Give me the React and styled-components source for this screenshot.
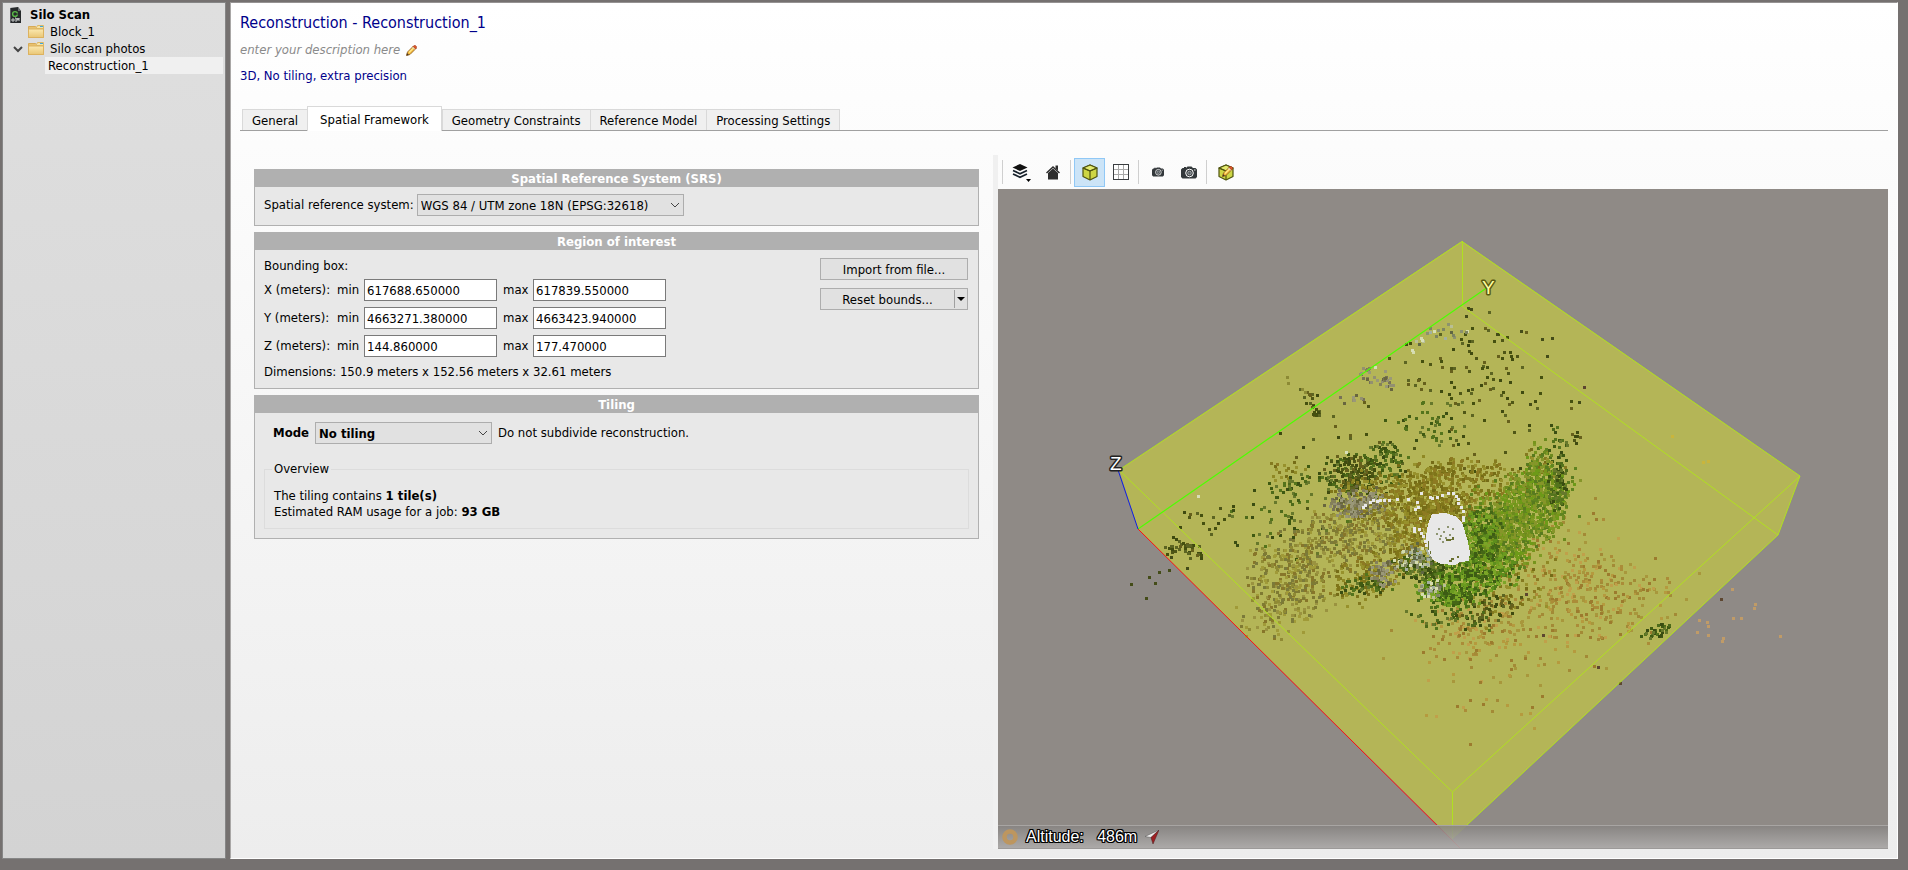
import React from "react";
import styled, { createGlobalStyle } from "styled-components";

const GlobalStyle = createGlobalStyle`
  *, *::before, *::after { box-sizing: border-box; }
  body {
    margin: 0;
    background: #757170;
    color: #000;
    font: 13px/16px "DejaVu Sans Condensed", Tahoma, "Noto Sans", sans-serif;
  }
  button, input, select { font: inherit; color: inherit; margin: 0; }
  svg { display: block; }
`;

/* ---------- window frame ---------- */

const Window = styled.div`
  display: flex;
  gap: 4px;
  min-height: 100vh;
  padding: 2px 10px 11px 2px;
`;

const Sidebar = styled.nav`
  flex: 0 0 224px;
  padding: 3px 2px;
  border: 1px solid #868686;
  background: linear-gradient(#dfdfdf, #d3d3d3);
`;

const Main = styled.main`
  flex: 1;
  min-width: 0;
  display: flex;
  flex-direction: column;
  padding: 9px;
  border: 1px solid #fff;
  border-top-color: #969393;
  border-left-color: #a9a7a6;
  background: linear-gradient(#ffffff, #ededed);
`;

/* ---------- project tree ---------- */

const Tree = styled.ul`
  list-style: none;
  margin: 0;
  padding: 0;
`;

const TreeItem = styled.li`
  display: flex;
  align-items: center;
  height: 17px;
  padding-left: ${(p) => p.$indent}px;
`;

const TreeLabel = styled.button`
  flex: 1;
  height: 17px;
  padding: 0 3px;
  border: 0;
  text-align: left;
  line-height: 17px;
  font-weight: ${(p) => (p.$root ? "bold" : "normal")};
  background: ${(p) => (p.$selected ? "#f0f0f0" : "transparent")};
`;

const TreeIcon = styled.span`
  flex: 0 0 ${(p) => p.$width}px;
`;

const Expander = styled.button`
  flex: 0 0 20px;
  height: 17px;
  padding: 0 5px;
  border: 0;
  background: transparent;
`;

/* ---------- header ---------- */

const Title = styled.h1`
  margin: 0 0 10px;
  padding-top: 1px;
  font-size: 16px;
  line-height: 19px;
  font-weight: normal;
  color: #00008b;
`;

const Description = styled.p`
  display: flex;
  align-items: center;
  gap: 6px;
  margin: 0 0 10px;
  color: #8a8a8a;
  font-style: italic;
`;

const IconButton = styled.button`
  padding: 0;
  border: 0;
  background: transparent;
`;

const Summary = styled.p`
  margin: 0 0 23px;
  color: #00008b;
`;

const TabList = styled.div`
  display: flex;
  align-items: flex-end;
  height: 24px;
  padding-left: 2px;
  border-bottom: 1px solid #a0a0a0;
`;

const Tab = styled.button`
  height: ${(p) => (p.$active ? 25 : 21)}px;
  margin: 0 ${(p) => (p.$active ? 0 : -1)}px ${(p) => (p.$active ? -1 : 0)}px 0;
  padding: 1px ${(p) => (p.$active ? 12 : 9)}px 0;
  border: 1px solid #d9d9d9;
  border-bottom: 0;
  background: ${(p) => (p.$active ? "#fff" : "#f0f0f0")};
`;

/* ---------- tab content ---------- */

const Content = styled.div`
  flex: 1;
  display: grid;
  grid-template-columns: minmax(0, 753fr) minmax(0, 895fr);
  padding-top: 24px;
`;

const Settings = styled.div`
  display: flex;
  flex-direction: column;
  gap: 6px;
  padding: 14px;
`;

const Panel = styled.section`
  border: 1px solid #b0b0b0;
  background: #e8e8e8;
`;

const PanelTitle = styled.h2`
  margin: -1px -1px 0;
  padding-top: 2px;
  font-size: 13px;
  line-height: 16px;
  text-align: center;
  color: #fff;
  background: #b0b0b0;
`;

const SrsRow = styled.div`
  display: flex;
  align-items: center;
  gap: 3px;
  padding: 7px 9px 9px;
`;

const SelectBox = styled.div`
  display: grid;
  align-items: center;
  width: ${(p) => p.$width}px;
  > * { grid-area: 1 / 1; }
  > svg { justify-self: end; margin-right: 4px; pointer-events: none; }
`;

const Select = styled.select`
  appearance: none;
  width: 100%;
  height: 22px;
  padding: 1px 20px 0 3px;
  border: 1px solid #adadad;
  border-radius: 0;
  background: #e1e1e1;
  font-weight: ${(p) => (p.$bold ? "bold" : "normal")};
`;

const RegionBody = styled.div`
  display: flex;
  justify-content: space-between;
  padding: 8px 10px 8px 9px;
`;

const BoundsForm = styled.div`
  display: flex;
  flex-direction: column;
  gap: 6px;
  > :first-child { margin-bottom: -1px; }
  > :last-child { padding-top: 1px; }
`;

const BoundsRow = styled.div`
  display: grid;
  grid-template-columns: 67px 21px 133px 24px 133px;
  column-gap: 6px;
  align-items: center;
`;

const NumberField = styled.input`
  width: 100%;
  height: 22px;
  padding: 1px 2px 0;
  border: 1px solid #7a7a7a;
  background: #fff;
`;

const Actions = styled.div`
  display: flex;
  flex-direction: column;
  gap: 8px;
  width: 148px;
`;

const PushButton = styled.button`
  flex: 1;
  height: 22px;
  padding: 1px 0 0;
  border: 1px solid #adadad;
  background: #e1e1e1;
`;

const ActionRow = styled.div`
  display: flex;
  ${PushButton}:first-child:not(:last-child) {
    border-right: 0;
  }
`;

const MenuButton = styled.button`
  display: flex;
  align-items: center;
  justify-content: center;
  width: 14px;
  height: 22px;
  padding: 0;
  border: 1px solid #adadad;
  border-left: 0;
  background: linear-gradient(#a0a0a0, #a0a0a0) 0 50% / 1px 18px no-repeat, #e1e1e1;
`;

const TilingBody = styled.div`
  padding: 9px;
`;

const ModeRow = styled.div`
  display: flex;
  align-items: center;
  gap: 6px;
  padding-left: 9px;
  margin-bottom: 17px;
`;

const Overview = styled.fieldset`
  margin: 0;
  min-width: 0;
  padding: 11px 9px 8px;
  border: 1px solid #dcdcdc;
`;

const OverviewTitle = styled.legend`
  padding: 0 2px;
  margin-left: -2px;
`;

const OverviewLine = styled.p`
  margin: 0;
`;

/* ---------- 3D view ---------- */

const Viewer = styled.section`
  display: flex;
  flex-direction: column;
  border-left: 5px solid #f0f0f0;
`;

const Toolbar = styled.div`
  display: flex;
  align-items: center;
  height: 34px;
  padding: 0 2px;
`;

const Separator = styled.span`
  width: 1px;
  height: 24px;
  margin: 0 3px 0 2px;
  background: #cfcfcf;
`;

const ToolButton = styled.button`
  display: flex;
  align-items: center;
  justify-content: center;
  width: 31px;
  height: 29px;
  padding: 0;
  border: 1px solid ${(p) => (p.$active ? "#90c8f6" : "transparent")};
  background: ${(p) => (p.$active ? "#cce4f7" : "transparent")};
`;

const Viewport = styled.div`
  flex: 1;
  display: grid;
  min-height: 400px;
  background: #8f8a86;
  > * { grid-area: 1 / 1; }
`;

const Scene = styled.svg`
  width: 100%;
  height: 100%;
  text {
    font: 19px "Liberation Sans", Arial, sans-serif;
    paint-order: stroke;
    stroke-width: 3px;
    stroke-linejoin: round;
  }
`;

const StatusBar = styled.div`
  align-self: end;
  z-index: 1;
  display: flex;
  align-items: center;
  gap: 8px;
  height: 24px;
  padding: 0 4px;
  border-top: 1px solid #a8a5a3;
  border-bottom: 1px solid #9c9a99;
  background: linear-gradient(rgba(135, 132, 130, 0.85), rgba(174, 172, 171, 0.92));
  color: #fff;
  font: 16px/18px "Liberation Sans", Arial, sans-serif;
  text-shadow: 1px 0 #000, -1px 0 #000, 0 1px #000, 0 -1px #000, 1px 1px #000, -1px -1px #000,
    1px -1px #000, -1px 1px #000;
`;

const Altitude = styled.span`
  white-space: pre;
`;

/* ---------- icons ---------- */

const Chevron = ({ size = 10, width = 1, color = "#444" }) => (
  <svg width={size} height={size} viewBox="0 0 10 10" fill="none" stroke={color} strokeWidth={width}>
    <path d="M1 3l4 4 4-4" />
  </svg>
);

const Caret = () => (
  <svg width="8" height="4" viewBox="0 0 8 4">
    <path d="M0 0h8L4 4z" fill="#000" />
  </svg>
);

const ProjectIcon = () => (
  <svg width="12" height="16" viewBox="0 0 12 16">
    <path d="M0 1l8-1 3 4v12H0z" fill="#26292b" />
    <path d="M8 0l3 4H8z" fill="#6a6e70" />
    <path d="M0 1l1 0v15H0z" fill="#5a5d60" />
    <circle cx="5" cy="7" r="2.4" fill="none" stroke="#58b947" strokeWidth="1.4" />
    <path d="M5 7h3" stroke="#26292b" strokeWidth="1" />
    <path d="M2 12h2v2H2zM5 11h1v4M7 14v-3l1 2 1-2v3" fill="none" stroke="#d6d8d9" strokeWidth="0.9" />
  </svg>
);

const FolderIcon = () => (
  <svg width="16" height="14" viewBox="0 0 16 14">
    <defs>
      <linearGradient id="folder" x1="0" y1="0" x2="0" y2="1">
        <stop offset="0" stopColor="#fbe9b0" />
        <stop offset="1" stopColor="#e9c675" />
      </linearGradient>
    </defs>
    <path d="M0.5 12.5V1.5h7l1 1h7v10z" fill="#e8c16f" stroke="#d6aa55" />
    <path d="M8.500 2.500l1-2h6v3h-7z" fill="#f7e3a6" stroke="#dcb765" />
    <path d="M12 1h3v1h-3z" fill="#3aa8e0" />
    <path d="M0.500 4h15v8.500h-15z" fill="url(#folder)" stroke="#dcb25f" />
  </svg>
);

const PencilShape = () => (
  <g>
    <path d="M0.5 10.500l1-3.500 6-6 2.500 2.500-6 6z" fill="#f3b63a" stroke="#8a5a1c" strokeWidth="0.8" />
    <path d="M2.500 7l5-5 1 1-5 5z" fill="#ffe98a" />
    <path d="M7 1.500l1-1h1.500l1 1V3l-1 1z" fill="#d9542b" stroke="#a33a1a" strokeWidth="0.5" />
    <path d="M6.500 2l2.500 2.500" stroke="#d7d7d7" strokeWidth="1" />
    <path d="M0.500 10.500l0.500-2.500 2 2z" fill="#4a3420" />
  </g>
);

const PencilIcon = () => (
  <svg width="11" height="11" viewBox="0 0 11 11">
    <PencilShape />
  </svg>
);

const LayersIcon = () => (
  <svg width="21" height="20" viewBox="0 0 21 20">
    <path d="M9 2l7.500 3.500L9 9 1.500 5.500z" fill="#111" />
    <path d="M2 8.500l7 3.200 7-3.200M2 12l7 3.200 7-3.200" fill="none" stroke="#16202a" strokeWidth="1.700" />
    <path d="M15 17h5l-2.500 3z" fill="#000" />
  </svg>
);

const HomeIcon = () => (
  <svg width="14" height="15" viewBox="0 0 14 15">
    <path d="M2 8l5-4.500L12 8v6.500H2z" fill="#2d2d2d" />
    <path d="M0.500 8L7 2l6.500 6" fill="none" stroke="#2d2d2d" strokeWidth="1.500" />
    <path d="M9.500 0.500h2.500v5L9.500 3.500z" fill="#2d2d2d" />
  </svg>
);

const CubeShape = () => (
  <g stroke="#4f5410" strokeWidth="1.200" strokeLinejoin="round">
    <path d="M8 1l7 3v8.500L8 16 1 12.500V4z" fill="#cdd645" />
    <path d="M8 1l7 3-7 3-7-3z" fill="#e3ea6e" />
    <path d="M8 7v9M1 4l7 3 7-3" fill="none" />
  </g>
);

const CubeIcon = () => (
  <svg width="16" height="17" viewBox="0 0 16 17">
    <CubeShape />
  </svg>
);

const EditCubeIcon = () => (
  <svg width="16" height="17" viewBox="0 0 16 17">
    <CubeShape />
    <g transform="translate(4 2)">
      <PencilShape />
    </g>
  </svg>
);

const GridIcon = () => (
  <svg width="16" height="16" viewBox="0 0 16 16" shapeRendering="crispEdges">
    <rect x="0.500" y="0.500" width="15" height="15" fill="#fff" />
    <path d="M5.500 1v14M10.500 1v14M1 5.500h14M1 10.500h14" stroke="#a9a9a9" />
    <rect x="0.500" y="0.500" width="15" height="15" fill="none" stroke="#3a3d40" />
  </svg>
);

const CameraIcon = ({ width }) => (
  <svg width={width} height={(width * 13) / 16} viewBox="0 0 16 13">
    <path d="M1.500 2H3V1h2v1l1.500-1.500h4L12 2h2.500L16 3.500V11l-1.500 1.500h-13L0 11V3.500z" fill="#33383b" />
    <circle cx="8.500" cy="7" r="3.800" fill="none" stroke="#fff" strokeWidth="1" />
    <circle cx="8.500" cy="7" r="1.800" fill="#565c60" stroke="#c8cccf" strokeWidth="0.7" />
    <path d="M13 3.500h1.500v1H13z" fill="#ddd" />
  </svg>
);

const RingIcon = () => (
  <svg width="16" height="16" viewBox="0 0 16 16">
    <circle cx="8" cy="8" r="5.500" fill="none" stroke="#bd965f" strokeWidth="4.500" />
  </svg>
);

const CompassIcon = () => (
  <svg width="14" height="14" viewBox="0 0 14 14">
    <path d="M14 0L0 6.500l6 1z" fill="#f0eeee" stroke="#555" strokeWidth="0.500" />
    <path d="M14 0L6 7.500 8 14z" fill="#9e1f22" stroke="#4b2020" strokeWidth="0.500" />
  </svg>
);

/* ---------- point cloud ---------- */

const PALETTES = {
  dark: ["#4f5616", "#3f4a10", "#5c6422", "#66601c", "#45500f"],
  forest: ["#3f5a12", "#4d6a1a", "#54741c", "#3a4d12", "#66782b"],
  green: ["#6c8a1e", "#76941c", "#5f8420", "#7f9a25", "#6d9a18", "#587a1f", "#86952a"],
  lowGreen: ["#4f7c18", "#5d8e1c", "#456716", "#6b9a20", "#3d5c14", "#7ba527"],
  olive: ["#847a20", "#8f8824", "#756c17", "#97912c", "#7f7519", "#8d7a22"],
  dry: ["#8f8a34", "#9a9340", "#7f7a32", "#87762a", "#a09a38", "#7b7a3a"],
  grey: ["#84805a", "#777256", "#939070", "#68663e", "#9a9878"],
  pale: ["#b9bf94", "#8c926e", "#d5dcae", "#7d8460", "#a3b0a0", "#5f6642"],
  orange: ["#b59a3e", "#ab8c38", "#c0a04a", "#a38a36", "#a8973c", "#9c7b2e"],
  inside: ["#8e9572", "#5d6530", "#c4cba5", "#7b7f4e"],
};

/* [centre x, centre y, radius x, radius y, rotation, count, palette] */
const CLUSTERS = [
  [1456, 362, 70, 40, 0, 60, "dark"],
  [1434, 334, 30, 12, -20, 20, "pale"],
  [1382, 381, 14, 8, 0, 22, "grey"],
  [1366, 375, 8, 9, 0, 14, "grey"],
  [1350, 401, 20, 8, 0, 8, "grey"],
  [1309, 397, 10, 8, 40, 10, "dark"],
  [1316, 411, 5, 9, -30, 14, "dark"],
  [1430, 422, 36, 24, 0, 50, "forest"],
  [1500, 398, 70, 50, 0, 42, "dark"],
  [1380, 450, 110, 50, 0, 40, "dark"],
  [1553, 446, 12, 26, 10, 30, "forest"],
  [1576, 437, 5, 8, 0, 7, "dark"],
  [1284, 468, 24, 10, -10, 18, "olive"],
  [1290, 485, 22, 10, -20, 30, "forest"],
  [1210, 518, 30, 16, 0, 16, "dark"],
  [1180, 547, 20, 11, 10, 40, "dark"],
  [1288, 520, 70, 40, 0, 56, "forest"],
  [1305, 555, 64, 36, -25, 260, "dry"],
  [1287, 588, 38, 36, -30, 210, "dry"],
  [1345, 530, 50, 26, -20, 200, "dry"],
  [1270, 620, 30, 20, 0, 40, "dry"],
  [1358, 476, 44, 24, 0, 150, "forest"],
  [1354, 473, 24, 18, 0, 110, "dark"],
  [1386, 455, 16, 14, 20, 56, "forest"],
  [1390, 500, 50, 28, 10, 280, "olive"],
  [1358, 502, 28, 14, 0, 170, "grey"],
  [1390, 540, 44, 34, 0, 170, "dry"],
  [1368, 575, 38, 22, -20, 160, "olive"],
  [1362, 585, 24, 9, 0, 50, "forest"],
  [1382, 572, 13, 14, 10, 60, "grey"],
  [1434, 474, 48, 16, -12, 220, "olive"],
  [1440, 508, 36, 24, 0, 460, "olive"],
  [1414, 535, 24, 30, 0, 180, "olive"],
  [1492, 490, 34, 28, 0, 120, "olive"],
  [1536, 465, 30, 18, 0, 44, "olive"],
  [1550, 600, 70, 60, 15, 200, "orange"],
  [1580, 560, 50, 50, 20, 80, "orange"],
  [1620, 600, 70, 40, 0, 90, "orange"],
  [1470, 630, 60, 34, 0, 120, "orange"],
  [1480, 680, 80, 50, 0, 46, "orange"],
  [1510, 580, 50, 30, -30, 90, "olive"],
  [1512, 519, 58, 36, -28, 680, "green"],
  [1492, 548, 36, 26, -10, 340, "green"],
  [1530, 502, 42, 28, -40, 440, "green"],
  [1535, 466, 12, 28, 5, 80, "green"],
  [1556, 484, 9, 26, 5, 80, "forest"],
  [1478, 538, 18, 30, 0, 200, "lowGreen"],
  [1470, 574, 46, 22, -15, 480, "lowGreen"],
  [1446, 592, 26, 12, 15, 190, "lowGreen"],
  [1490, 610, 28, 14, -20, 50, "dark"],
  [1450, 617, 36, 14, 0, 46, "forest"],
  [1420, 566, 24, 12, 10, 140, "forest"],
  [1414, 557, 17, 11, 0, 80, "pale"],
  [1429, 589, 12, 8, 0, 40, "pale"],
  [1655, 630, 15, 6, -20, 34, "forest"],
  [1640, 590, 30, 20, 0, 16, "orange"],
];

const STRAYS = {
  "#c09b67": [
    [1731, 588], [1732, 617], [1740, 617], [1754, 603], [1753, 607], [1698, 619], [1706, 621],
    [1696, 631], [1707, 634], [1722, 637], [1721, 640], [1779, 635], [1707, 625],
  ],
  "#5d4630": [[1720, 598], [1619, 682], [1583, 386], [1542, 634], [1597, 666], [1525, 593]],
  "#444c18": [
    [1130, 583], [1148, 576], [1158, 571], [1145, 597], [1154, 582], [1168, 569], [1170, 556],
    [1186, 567], [1529, 403], [1551, 337], [1578, 401], [1496, 333], [1541, 338], [1546, 355],
    [1520, 330], [1470, 308], [1465, 315], [1467, 307],
  ],
  "#c9b53c": [[1671, 435], [1707, 460], [1702, 461]],
  "#8c8a35": [[1286, 376], [1287, 382], [1301, 388], [1304, 391]],
  "#d8dfb8": [[1345, 451], [1197, 495], [1411, 349], [1421, 339], [1433, 330], [1374, 366]],
};

const WHITE_TRAIL = [
  [1362, 506], [1364, 504], [1369, 501], [1372, 499], [1376, 500], [1379, 499], [1383, 499],
  [1388, 499], [1396, 498], [1407, 498], [1416, 501], [1414, 508], [1417, 506], [1420, 492],
  [1429, 496], [1431, 497], [1436, 496], [1441, 494], [1447, 492], [1452, 492], [1455, 495],
  [1457, 498], [1457, 502], [1460, 506], [1462, 510], [1462, 516], [1462, 519], [1419, 517],
  [1413, 527], [1413, 530], [1418, 528], [1420, 532], [1422, 535], [1424, 540], [1425, 544],
];

function createRandom(seed) {
  let s = seed;
  return () => {
    s = (s * 1664525 + 1013904223) % 4294967296;
    return s / 4294967296;
  };
}

const squares = (points, size = 3) => points.map(([x, y]) => `M${x} ${y}h${size}v${size}h-${size}z`).join("");

function buildCloud() {
  const random = createRandom(20);
  const layers = [];
  CLUSTERS.forEach(([cx, cy, rx, ry, angle, count, palette]) => {
    const colors = PALETTES[palette];
    const turn = (angle * Math.PI) / 180;
    const buckets = Array.from({ length: colors.length * 2 }, () => []);
    for (let i = 0; i < count; i += 1) {
      const r = Math.pow(random(), 0.7) * (random() < 0.2 ? 1.35 : 1);
      const t = random() * Math.PI * 2;
      const px = Math.cos(t) * r * rx;
      const py = Math.sin(t) * r * ry;
      const x = Math.round(cx + px * Math.cos(turn) - py * Math.sin(turn));
      const y = Math.round(cy + px * Math.sin(turn) + py * Math.cos(turn));
      buckets[Math.floor(random() * buckets.length)].push([x, y]);
    }
    buckets.forEach((points, i) => layers.push({ color: colors[i % colors.length], d: squares(points) }));
  });
  Object.entries(STRAYS).forEach(([color, points]) => layers.push({ color, d: squares(points) }));
  return layers;
}

const CLOUD = buildCloud();

const SILO_SPECKS = [
  [1438, 528], [1443, 531], [1447, 526], [1452, 528], [1440, 535], [1445, 537], [1436, 533],
  [1449, 534], [1452, 537], [1442, 541], [1447, 539], [1439, 538],
];

const PointCloudScene = () => (
  <Scene viewBox="998 189 890 660" role="img" aria-label="Reconstruction region with tie points">
    <polygon points="1462,241 1800,476 1778,535 1452,839 1138,529 1119,470" fill="#b4b557" />
    <g shapeRendering="crispEdges">
      {CLOUD.map((layer, i) => (
        <path key={i} d={layer.d} fill={layer.color} />
      ))}
      <path
        d="M1432 514L1445 513 1455 516 1462 522 1465 532 1468 542 1470 552 1469 561 1461 562 1455 565 1441 564 1433 560 1428 551 1426 536 1428 524z"
        fill="#e8e8e8"
      />
      <path d={squares(WHITE_TRAIL)} fill="#e8e8e8" />
      <path d={squares(SILO_SPECKS, 2)} fill={PALETTES.inside[0]} />
      <path d="M1446 539h6v-2h2v3h-3v1h-5zM1449 560h2v-2h3v2h-2v2h-3zM1457 556h2v2h-2zM1430 551h1v3h-1zM1428 541h1v9h-1zM1459 562h3v1h-3z" fill="#6a7030" />
    </g>
    <g fill="none" stroke="#b0e020" strokeWidth="1">
      <path d="M1119 470L1462 241.500 1800 476 1778 535 1452 839" />
      <path d="M1462.500 241v65M1462 306l316 229M1119 470l333.500 322L1800 476M1452.500 792v47" />
    </g>
    <path d="M1138 529L1488 287" stroke="#4cff00" strokeWidth="1.200" />
    <path d="M1138 529l323 320" stroke="#ff1010" strokeWidth="1" />
    <path d="M1138 529l-21-62" stroke="#1020e0" strokeWidth="1" />
    <text x="1482" y="294" fill="#ffffa0" stroke="#5a5a10">Y</text>
    <text x="1110" y="470" fill="#fff" stroke="#222">Z</text>
  </Scene>
);

/* ---------- page sections ---------- */

const ProjectTree = () => (
  <Sidebar aria-label="Project tree">
    <Tree>
      <TreeItem $indent={5}>
        <TreeIcon $width={17}><ProjectIcon /></TreeIcon>
        <TreeLabel $root>Silo Scan</TreeLabel>
      </TreeItem>
      <TreeItem $indent={23}>
        <TreeIcon $width={19}><FolderIcon /></TreeIcon>
        <TreeLabel>Block_1</TreeLabel>
      </TreeItem>
      <TreeItem $indent={3}>
        <Expander aria-label="Collapse Silo scan photos" aria-expanded="true">
          <Chevron width={2} />
        </Expander>
        <TreeIcon $width={19}><FolderIcon /></TreeIcon>
        <TreeLabel>Silo scan photos</TreeLabel>
      </TreeItem>
      <TreeItem $indent={40}>
        <TreeLabel $selected aria-current="page">Reconstruction_1</TreeLabel>
      </TreeItem>
    </Tree>
  </Sidebar>
);

const TABS = ["General", "Spatial Framework", "Geometry Constraints", "Reference Model", "Processing Settings"];

const BOUNDS = [
  { axis: "X", min: "617688.650000", max: "617839.550000" },
  { axis: "Y", min: "4663271.380000", max: "4663423.940000" },
  { axis: "Z", min: "144.860000", max: "177.470000" },
];

const SrsPanel = () => (
  <Panel>
    <PanelTitle>Spatial Reference System (SRS)</PanelTitle>
    <SrsRow>
      <label htmlFor="srs">Spatial reference system:</label>
      <SelectBox $width={267}>
        <Select id="srs">
          <option>WGS 84 / UTM zone 18N (EPSG:32618)</option>
        </Select>
        <Chevron />
      </SelectBox>
    </SrsRow>
  </Panel>
);

const RegionPanel = () => (
  <Panel>
    <PanelTitle>Region of interest</PanelTitle>
    <RegionBody>
      <BoundsForm>
        <span>Bounding box:</span>
        {BOUNDS.map(({ axis, min, max }) => (
          <BoundsRow key={axis}>
            <span>{axis} (meters):</span>
            <label htmlFor={`${axis}-min`}>min</label>
            <NumberField id={`${axis}-min`} defaultValue={min} />
            <label htmlFor={`${axis}-max`}>max</label>
            <NumberField id={`${axis}-max`} defaultValue={max} />
          </BoundsRow>
        ))}
        <span>Dimensions: 150.9 meters x 152.56 meters x 32.61 meters</span>
      </BoundsForm>
      <Actions>
        <ActionRow>
          <PushButton>Import from file...</PushButton>
        </ActionRow>
        <ActionRow>
          <PushButton>Reset bounds...</PushButton>
          <MenuButton aria-label="More reset options"><Caret /></MenuButton>
        </ActionRow>
      </Actions>
    </RegionBody>
  </Panel>
);

const TilingPanel = () => (
  <Panel>
    <PanelTitle>Tiling</PanelTitle>
    <TilingBody>
      <ModeRow>
        <label htmlFor="mode"><b>Mode</b></label>
        <SelectBox $width={177}>
          <Select id="mode" $bold>
            <option>No tiling</option>
          </Select>
          <Chevron />
        </SelectBox>
        <span>Do not subdivide reconstruction.</span>
      </ModeRow>
      <Overview>
        <OverviewTitle>Overview</OverviewTitle>
        <OverviewLine>The tiling contains <b>1 tile(s)</b></OverviewLine>
        <OverviewLine>Estimated RAM usage for a job: <b>93 GB</b></OverviewLine>
      </Overview>
    </TilingBody>
  </Panel>
);

const ReconstructionViewer = () => (
  <Viewer>
    <Toolbar>
      <Separator />
      <ToolButton aria-label="Layers"><LayersIcon /></ToolButton>
      <ToolButton aria-label="Home view"><HomeIcon /></ToolButton>
      <Separator />
      <ToolButton $active aria-label="Show region" aria-pressed="true"><CubeIcon /></ToolButton>
      <ToolButton aria-label="Show grid"><GridIcon /></ToolButton>
      <Separator />
      <ToolButton aria-label="Smaller photos"><CameraIcon width={12} /></ToolButton>
      <ToolButton aria-label="Larger photos"><CameraIcon width={16} /></ToolButton>
      <Separator />
      <ToolButton aria-label="Edit region"><EditCubeIcon /></ToolButton>
    </Toolbar>
    <Viewport>
      <PointCloudScene />
      <StatusBar>
        <RingIcon />
        <Altitude>{"Altitude:   486m"}</Altitude>
        <CompassIcon />
      </StatusBar>
    </Viewport>
  </Viewer>
);

export default function App() {
  return (
    <>
      <GlobalStyle />
      <Window>
        <ProjectTree />
        <Main>
          <Title>Reconstruction - Reconstruction_1</Title>
          <Description>
            enter your description here
            <IconButton aria-label="Edit description"><PencilIcon /></IconButton>
          </Description>
          <Summary>3D, No tiling, extra precision</Summary>
          <TabList role="tablist">
            {TABS.map((name) => (
              <Tab key={name} role="tab" $active={name === "Spatial Framework"} aria-selected={name === "Spatial Framework"}>
                {name}
              </Tab>
            ))}
          </TabList>
          <Content>
            <Settings>
              <SrsPanel />
              <RegionPanel />
              <TilingPanel />
            </Settings>
            <ReconstructionViewer />
          </Content>
        </Main>
      </Window>
    </>
  );
}
